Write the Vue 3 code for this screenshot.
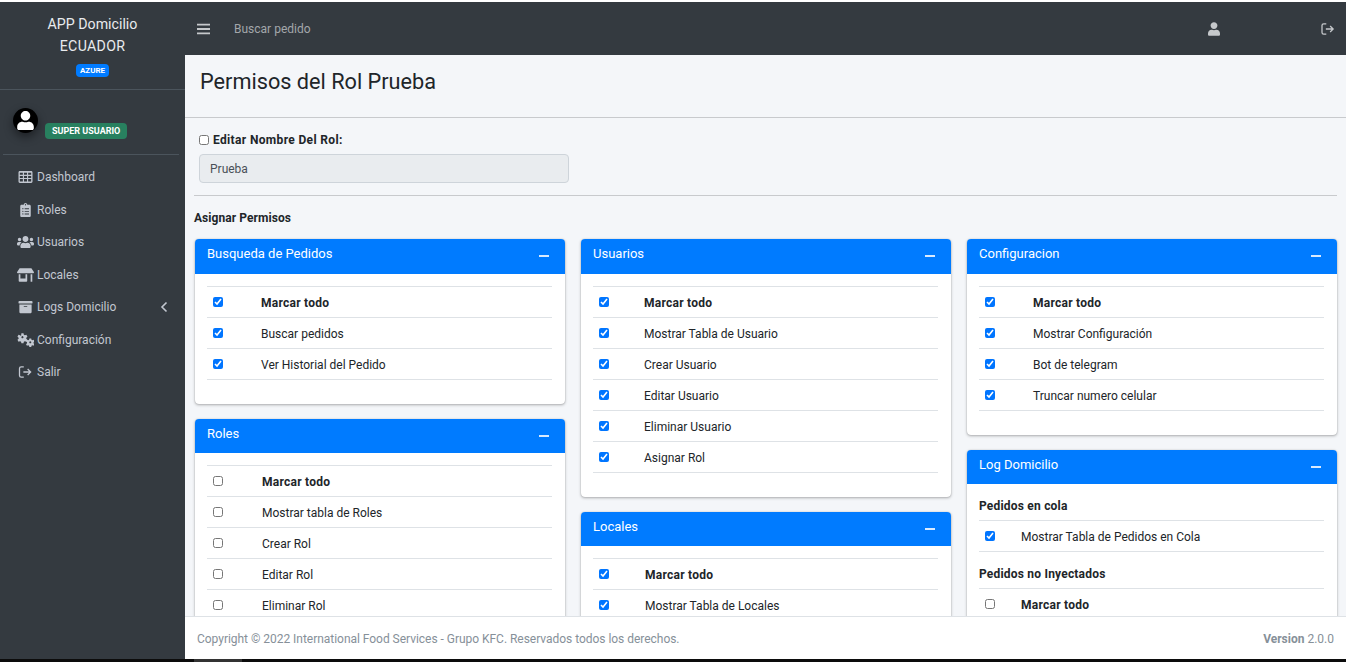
<template>
  <div class="screen">
    <div class="frame">
      <aside class="sidebar">
        <div class="brand">
          <div class="brand-name">APP Domicilio</div>
          <div class="brand-name">ECUADOR</div>
          <span class="tag tag-blue">AZURE</span>
        </div>
        <div class="user-panel">
          <span class="avatar">
            <svg viewBox="0 0 448 512" width="17" height="19"><path fill="#fff" :d="icons.user.d" /></svg>
          </span>
          <span class="tag tag-green">SUPER USUARIO</span>
        </div>
        <nav class="nav">
          <a v-for="item in navItems" :key="item.label" class="nav-link">
            <svg class="nav-icon" :viewBox="icons[item.icon].box" :width="icons[item.icon].w" height="14">
              <path fill="currentColor" :d="icons[item.icon].d" />
            </svg>
            <span>{{ item.label }}</span>
            <svg v-if="item.arrow" class="nav-arrow" viewBox="0 0 8 12" width="8" height="12">
              <path d="M6.5 1.5 2 6l4.5 4.5" fill="none" stroke="currentColor" stroke-width="1.6" />
            </svg>
          </a>
          <a class="nav-link">
            <svg class="nav-icon" viewBox="0 0 16 14" width="16" height="12">
              <path :d="exitPath" fill="none" stroke="currentColor" stroke-width="1.5" />
            </svg>
            <span>Salir</span>
          </a>
        </nav>
      </aside>

      <div class="main">
        <header class="topbar">
          <svg viewBox="0 0 14 12" width="13" height="12" class="burger">
            <path d="M0 1.2h14M0 6h14M0 10.8h14" stroke="currentColor" stroke-width="1.9" stroke-linecap="round" />
          </svg>
          <span class="search">Buscar pedido</span>
          <svg class="top-user" viewBox="0 0 448 512" width="12" height="14"><path fill="currentColor" :d="icons.user.d" /></svg>
          <svg class="top-exit" viewBox="0 0 16 14" width="14" height="12">
            <path :d="exitPath" fill="none" stroke="currentColor" stroke-width="1.5" />
          </svg>
        </header>

        <div class="page-head">
          <h1>Permisos del Rol Prueba</h1>
        </div>

        <section class="content">
          <div class="role-form">
            <label class="role-label"><input type="checkbox" /> Editar Nombre Del Rol:</label>
            <input class="role-input" type="text" value="Prueba" disabled />
          </div>
          <hr />
          <h2>Asignar Permisos</h2>
          <div class="columns">
            <div v-for="(col, i) in columns" :key="i" class="column">
              <div v-for="card in col" :key="card.title" class="card">
                <div class="card-head">
                  <span>{{ card.title }}</span>
                  <i class="collapse"></i>
                </div>
                <div class="card-body">
                  <div v-for="group in card.groups" :key="group.name || card.title" class="group">
                    <div v-if="group.name" class="group-name">{{ group.name }}</div>
                    <div v-for="row in group.rows" :key="row" class="perm"
                      :style="{ gridTemplateColumns: card.indent + 'px 1fr' }">
                      <input type="checkbox" :checked="card.checked && !group.off" />
                      <span :class="{ strong: row === 'Marcar todo' }">{{ row }}</span>
                    </div>
                  </div>
                </div>
              </div>
            </div>
          </div>
        </section>

        <footer class="footer">
          <span>Copyright © 2022 International Food Services - Grupo KFC. Reservados todos los derechos.</span>
          <span><b>Version</b> 2.0.0</span>
        </footer>
      </div>
    </div>
    <div class="bottom-edge"><i></i></div>
  </div>
</template>

<script setup>
const exitPath = 'M6 1H3a2 2 0 0 0-2 2v8a2 2 0 0 0 2 2h3M5.5 7H14M10.5 3.5 14 7l-3.5 3.5'

const icons = {
  user: {
    box: '0 0 448 512', w: 12,
    d: 'M224 256c70.7 0 128-57.3 128-128S294.7 0 224 0 96 57.3 96 128s57.3 128 128 128zm89.6 32h-16.7c-22.2 10.2-46.9 16-72.9 16s-50.6-5.8-72.9-16h-16.7C60.2 288 0 348.2 0 422.4V464c0 26.5 21.5 48 48 48h352c26.5 0 48-21.5 48-48v-41.6c0-74.2-60.2-134.4-134.4-134.4z'
  },
  grid: {
    box: '0 0 512 512', w: 14,
    d: 'M48 40h416c26 0 48 22 48 48v336c0 26-22 48-48 48H48c-26 0-48-22-48-48V88c0-26 22-48 48-48zM48 104v72h112v-72zm152 0v72h112v-72zm152 0v72h112v-72zM48 216v72h112v-72zm152 0v72h112v-72zm152 0v72h112v-72zM48 328v88h112v-88zm152 0v88h112v-88zm152 0v88h112v-88z'
  },
  clipboard: {
    box: '0 0 384 512', w: 11,
    d: 'M336 64h-80c0-35.3-28.7-64-64-64s-64 28.7-64 64H48C21.5 64 0 85.5 0 112v352c0 26.5 21.5 48 48 48h288c26.5 0 48-21.5 48-48V112c0-26.5-21.5-48-48-48zM96 424c-13.3 0-24-10.7-24-24s10.7-24 24-24 24 10.7 24 24-10.7 24-24 24zm0-96c-13.3 0-24-10.7-24-24s10.7-24 24-24 24 10.7 24 24-10.7 24-24 24zm0-96c-13.3 0-24-10.7-24-24s10.7-24 24-24 24 10.7 24 24-10.7 24-24 24zm96-192c13.3 0 24 10.7 24 24s-10.7 24-24 24-24-10.7-24-24 10.7-24 24-24zm128 368c0 4.4-3.6 8-8 8H168c-4.4 0-8-3.6-8-8v-16c0-4.4 3.6-8 8-8h144c4.4 0 8 3.6 8 8v16zm0-96c0 4.4-3.6 8-8 8H168c-4.4 0-8-3.6-8-8v-16c0-4.4 3.6-8 8-8h144c4.4 0 8 3.6 8 8v16zm0-96c0 4.4-3.6 8-8 8H168c-4.4 0-8-3.6-8-8v-16c0-4.4 3.6-8 8-8h144c4.4 0 8 3.6 8 8v16z'
  },
  users: {
    box: '0 0 640 512', w: 17,
    d: 'M96 224c35.3 0 64-28.7 64-64s-28.7-64-64-64-64 28.7-64 64 28.7 64 64 64zm448 0c35.3 0 64-28.7 64-64s-28.7-64-64-64-64 28.7-64 64 28.7 64 64 64zm32 32h-64c-17.6 0-33.5 7.1-45.1 18.6 40.3 22.1 68.9 62 75.1 109.4h66c17.7 0 32-14.3 32-32v-32c0-35.3-28.7-64-64-64zm-256 0c61.9 0 112-50.1 112-112S381.9 32 320 32 208 82.1 208 144s50.1 112 112 112zm76.8 32h-8.3c-20.8 10-43.9 16-68.5 16s-47.6-6-68.5-16h-8.3C179.6 288 128 339.6 128 403.2V432c0 26.5 21.5 48 48 48h288c26.5 0 48-21.5 48-48v-28.8c0-63.6-51.6-115.2-115.2-115.2zm-223.7-13.4C161.5 263.1 145.6 256 128 256H64c-35.3 0-64 28.7-64 64v32c0 17.7 14.3 32 32 32h65.9c6.3-47.4 34.9-87.3 75.2-109.4z'
  },
  store: {
    box: '0 0 640 512', w: 17,
    d: 'M320 384H128V224H64v256c0 17.7 14.3 32 32 32h256c17.7 0 32-14.3 32-32V224h-64v160zm314.6-241.8l-85.3-128c-6-8.9-16-14.2-26.7-14.2H117.4c-10.7 0-20.7 5.3-26.6 14.2l-85.3 128c-14.2 21.3 1 49.8 26.6 49.8H608c25.5 0 40.7-28.5 26.6-49.8zM512 496c0 8.8 7.2 16 16 16h32c8.8 0 16-7.2 16-16V224h-64v272z'
  },
  archive: {
    box: '0 0 512 512', w: 14,
    d: 'M32 448c0 17.7 14.3 32 32 32h384c17.7 0 32-14.3 32-32V160H32v288zm160-212c0-6.6 5.4-12 12-12h104c6.6 0 12 5.4 12 12v8c0 6.6-5.4 12-12 12H204c-6.6 0-12-5.4-12-12v-8zM480 32H32C14.3 32 0 46.3 0 64v48c0 8.8 7.2 16 16 16h480c8.8 0 16-7.2 16-16V64c0-17.7-14.3-32-32-32z'
  },
  cogs: {
    box: '0 0 640 512', w: 17,
    d: 'M165 0h80l12 58 40 22 56-20 40 70-44 38v44l44 38-40 70-56-20-40 22-12 58h-80l-12-58-40-22-56 20-40-70 44-38v-44l-44-38 40-70 56 20 40 22zm40 110a40 40 0 1 0 .1 0zM465 200h70l10 48 34 20 46-17 35 60-37 32v38l37 32-35 60-46-17-34 20-10 48h-70l-10-48-34-20-46 17-35-60 37-32v-38l-37-32 35-60 46 17 34-20zm35 100a38 38 0 1 0 .1 0z'
  }
}

const navItems = [
  { label: 'Dashboard', icon: 'grid' },
  { label: 'Roles', icon: 'clipboard' },
  { label: 'Usuarios', icon: 'users' },
  { label: 'Locales', icon: 'store' },
  { label: 'Logs Domicilio', icon: 'archive', arrow: true },
  { label: 'Configuración', icon: 'cogs' }
]

const columns = [
  [
    {
      title: 'Busqueda de Pedidos', indent: 54, checked: true,
      groups: [{ rows: ['Marcar todo', 'Buscar pedidos', 'Ver Historial del Pedido'] }]
    },
    {
      title: 'Roles', indent: 55, checked: false,
      groups: [{ rows: ['Marcar todo', 'Mostrar tabla de Roles', 'Crear Rol', 'Editar Rol', 'Eliminar Rol'] }]
    }
  ],
  [
    {
      title: 'Usuarios', indent: 51, checked: true,
      groups: [{ rows: ['Marcar todo', 'Mostrar Tabla de Usuario', 'Crear Usuario', 'Editar Usuario', 'Eliminar Usuario', 'Asignar Rol'] }]
    },
    {
      title: 'Locales', indent: 52, checked: true,
      groups: [{ rows: ['Marcar todo', 'Mostrar Tabla de Locales'] }]
    }
  ],
  [
    {
      title: 'Configuracion', indent: 54, checked: true,
      groups: [{ rows: ['Marcar todo', 'Mostrar Configuración', 'Bot de telegram', 'Truncar numero celular'] }]
    },
    {
      title: 'Log Domicilio', indent: 42, checked: true,
      groups: [
        { name: 'Pedidos en cola', rows: ['Mostrar Tabla de Pedidos en Cola'] },
        { name: 'Pedidos no Inyectados', off: true, rows: ['Marcar todo'] }
      ]
    }
  ]
]
</script>

<style>
html,
body {
  margin: 0;
  height: 100%;
  overflow: hidden;
}
</style>

<style scoped>
.screen {
  display: flex;
  flex-direction: column;
  height: 662px;
  padding-top: 2px;
  box-sizing: border-box;
  background: #fff;
  font-family: Roboto, "Liberation Sans", sans-serif;
  font-size: 12px;
  color: #212529;
  overflow: hidden;
}

.frame {
  display: flex;
  flex: 1;
  min-height: 0;
}

.bottom-edge {
  height: 3px;
  background: #0c0c0c;
  padding-left: 194px;
}

.bottom-edge i {
  display: block;
  width: 48px;
  height: 3px;
  background: #333;
}

.sidebar {
  width: 185px;
  flex: none;
  background: #343a40;
  color: #c2c7d0;
}

.brand {
  height: 88px;
  box-sizing: border-box;
  padding-top: 11px;
  text-align: center;
  border-bottom: 1px solid #4b545c;
}

.brand-name {
  font-size: 14.2px;
  line-height: 22px;
  color: #e9ebee;
}

.brand-name + .brand-name {
  letter-spacing: 0.3px;
}

.tag {
  display: inline-block;
  font-weight: 700;
  color: #fff;
  border-radius: 4px;
  white-space: nowrap;
}

.tag-blue {
  margin-top: 7px;
  padding: 0 4px;
  line-height: 13px;
  font-size: 8px;
  background: #007bff;
}

.tag-green {
  padding: 0 7px;
  line-height: 16px;
  font-size: 9px;
  background: #28805f;
  margin: 15px 0 0 7px;
}

.user-panel {
  display: flex;
  align-items: flex-start;
  height: 65px;
  margin: 0 6px 0 3px;
  padding: 18px 0 0 10px;
  box-sizing: border-box;
  border-bottom: 1px solid #4b545c;
}

.avatar {
  width: 25px;
  height: 25px;
  flex: none;
  border-radius: 50%;
  background: #000;
  box-shadow: 0 4px 10px rgba(0, 0, 0, 0.45);
  display: flex;
  align-items: center;
  justify-content: center;
  overflow: hidden;
}

.nav {
  display: flex;
  flex-direction: column;
  padding-top: 6px;
}

.nav-link {
  display: flex;
  align-items: center;
  height: 32.5px;
  position: relative;
  padding-left: 17px;
}

.nav-icon {
  flex: none;
  width: 17px;
  margin-right: 3px;
}

.nav-arrow {
  position: absolute;
  left: 160px;
  top: 10px;
}

.main {
  flex: 1;
  min-width: 0;
  display: flex;
  flex-direction: column;
  background: #f4f6f9;
}

.topbar {
  display: flex;
  align-items: center;
  height: 53px;
  flex: none;
  background: #343a40;
  color: #c5c8cb;
  padding: 0 11px 0 12px;
}

.search {
  margin-left: 24px;
  color: #a3a7ab;
}

.top-user {
  margin-left: auto;
  margin-right: 101px;
}

.page-head {
  height: 63px;
  flex: none;
  box-sizing: border-box;
  border-bottom: 1px solid #c8cacd;
  padding: 14px 15px 0;
}

h1 {
  margin: 0;
  font-size: 21.7px;
  line-height: 26px;
  font-weight: 400;
}

.content {
  flex: 1;
  min-height: 0;
  overflow: hidden;
  padding: 0 9px;
}

.role-form {
  padding: 15px 0 0 5px;
}

.role-label {
  display: flex;
  align-items: center;
  gap: 4px;
  height: 14px;
  font-weight: 700;
  letter-spacing: 0.35px;
}

.role-label input {
  margin: 0;
  width: 10px;
  height: 10px;
}

.role-input {
  display: block;
  width: 370px;
  height: 29px;
  box-sizing: border-box;
  margin-top: 7px;
  padding: 0 10px;
  font: inherit;
  color: #495057;
  background: #e9ecef;
  border: 1px solid #ced4da;
  border-radius: 4px;
}

hr {
  margin: 12px 0 0;
  border: 0;
  border-top: 1px solid #c8cacd;
}

h2 {
  margin: 15px 0 14px;
  font-size: 12px;
  line-height: 14px;
  font-weight: 700;
  letter-spacing: 0.06px;
}

.columns {
  display: grid;
  grid-template-columns: repeat(3, 369.5px);
  gap: 16.5px;
  padding-left: 1px;
}

.column {
  display: flex;
  flex-direction: column;
  gap: 15px;
}

.card {
  background: #fff;
  border-radius: 4px;
  box-shadow: 0 0 1px rgba(0, 0, 0, 0.25), 0 1px 3px rgba(0, 0, 0, 0.3);
  overflow: hidden;
}

.card-head {
  display: flex;
  justify-content: space-between;
  height: 35px;
  box-sizing: border-box;
  padding: 7px 16px 0 12px;
  background: #007bff;
  color: #fff;
  font-size: 13px;
  line-height: 15px;
}

.card + .card .card-head {
  height: 34px;
}

.collapse {
  width: 10px;
  height: 2px;
  margin-top: 9px;
  background: #d8eaff;
}

.card-body {
  padding: 12px 13px 24px 12px;
}

.group-name {
  display: flex;
  align-items: flex-end;
  height: 37px;
  box-sizing: border-box;
  padding-bottom: 7px;
  line-height: 14px;
  font-weight: 700;
  letter-spacing: 0.2px;
  border-bottom: 1px solid #dee2e6;
}

.group:first-child .group-name {
  margin-top: -12px;
}

.perm {
  display: grid;
  align-items: center;
  height: 31px;
  box-sizing: border-box;
  border-bottom: 1px solid #dee2e6;
}

.perm span {
  padding-top: 2px;
}

.group:first-child .perm:first-child {
  height: 32px;
  border-top: 1px solid #dee2e6;
}

.perm input {
  width: 10px;
  height: 10px;
  margin: 0 0 0 6px;
}

.perm .strong {
  font-weight: 700;
  letter-spacing: 0.25px;
}

.footer {
  display: flex;
  justify-content: space-between;
  align-items: center;
  height: 43px;
  flex: none;
  box-sizing: border-box;
  background: #fff;
  border-top: 1px solid #dee2e6;
  padding: 2px 12px 0 12px;
  color: #869099;
}

.footer span:first-child {
  letter-spacing: -0.03px;
}
</style>
